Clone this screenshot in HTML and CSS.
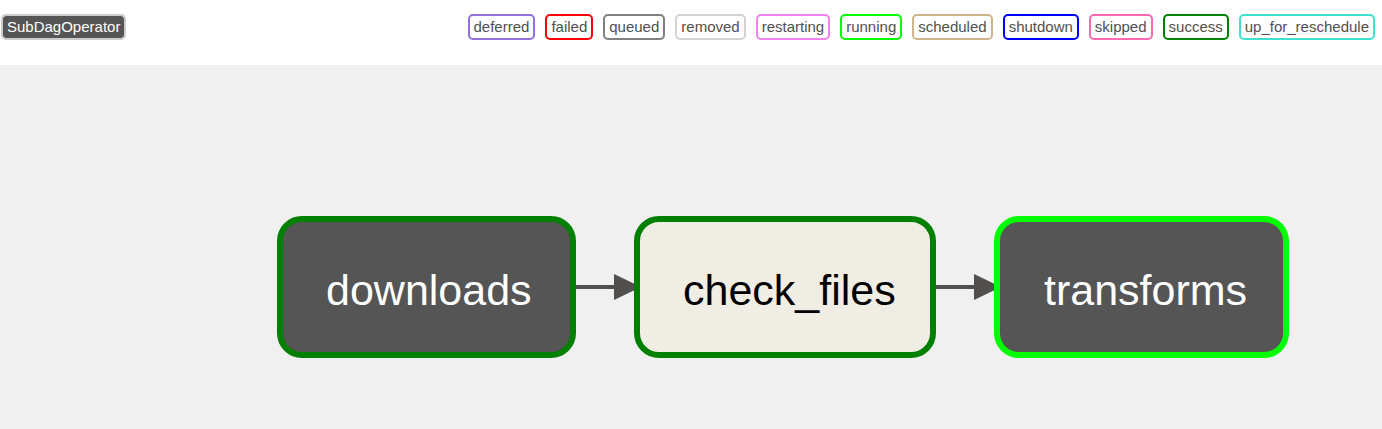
FILE: index.html
```html
<!DOCTYPE html>
<html lang="en">
<head>
<meta charset="utf-8">
<title>DAG graph</title>
<link rel="stylesheet" href="styles.css">
</head>
<body>
<header class="legend">
  <span class="tag operator">SubDagOperator</span>
  <div class="states">
    <span class="tag deferred">deferred</span>
    <span class="tag failed">failed</span>
    <span class="tag queued">queued</span>
    <span class="tag removed">removed</span>
    <span class="tag restarting">restarting</span>
    <span class="tag running">running</span>
    <span class="tag scheduled">scheduled</span>
    <span class="tag shutdown">shutdown</span>
    <span class="tag skipped">skipped</span>
    <span class="tag success">success</span>
    <span class="tag up-for-reschedule">up_for_reschedule</span>
  </div>
</header>
<main class="canvas">
  <svg class="graph" viewBox="0 0 1382 364" preserveAspectRatio="xMinYMin meet">
    <g class="edge">
      <path d="M570 220H616V224H570Z M614 209L641 222L614 235Z"/>
      <path d="M930 220H976V224H930Z M974 209L1001 222L974 235Z"/>
    </g>
    <g class="node subdag node-success">
      <rect x="280" y="154" width="293" height="136" rx="22"/>
      <text x="326" y="240">downloads</text>
    </g>
    <g class="node node-success">
      <rect x="637" y="154" width="296" height="136" rx="22"/>
      <text x="683" y="240">check_files</text>
    </g>
    <g class="node subdag node-running">
      <rect x="997" y="154" width="289" height="136" rx="22"/>
      <text x="1044" y="240">transforms</text>
    </g>
  </svg>
</main>
</body>
</html>
```

FILE: styles.css
```css
body {
  margin: 0;
  min-height: 100vh;
  display: flex;
  flex-direction: column;
  background: #f0f0f0;
  color: #51504f;
  font-family: "Liberation Sans", Arial, sans-serif;
}

.legend {
  display: flex;
  justify-content: space-between;
  align-items: flex-start;
  gap: 10px;
  padding: 14px 7px 25px 1px;
  background: #fff;
}

.states {
  display: flex;
  flex-wrap: wrap;
  justify-content: flex-end;
  gap: 10px;
}

.tag {
  padding: 0 4px;
  border: 2px solid;
  border-radius: 5px;
  font-size: 15px;
  line-height: 22px;
  white-space: nowrap;
}

.operator { padding: 0 4px; border-color: #ccc; background: #555; background-clip: padding-box; color: #fff; }
.deferred { border-color: mediumpurple; }
.failed { border-color: red; }
.queued { border-color: gray; }
.removed { border-color: lightgrey; }
.restarting { border-color: violet; }
.running { border-color: lime; }
.scheduled { border-color: tan; }
.shutdown { border-color: blue; }
.skipped { border-color: hotpink; }
.success { border-color: green; }
.up-for-reschedule { border-color: turquoise; }

.canvas { flex: 1; }

.graph {
  display: block;
  width: 100%;
}

.edge { fill: #51504f; }
.node rect { fill: #f0ede4; stroke-width: 6px; }
.node text { fill: #000; font-size: 43px; }
.subdag rect { fill: #555; }
.subdag text { fill: #fff; }
.node-success rect { stroke: green; }
.node-running rect { stroke: lime; }

.tag { color: #51504f; }
.tag.operator { color: #fff; }
```
